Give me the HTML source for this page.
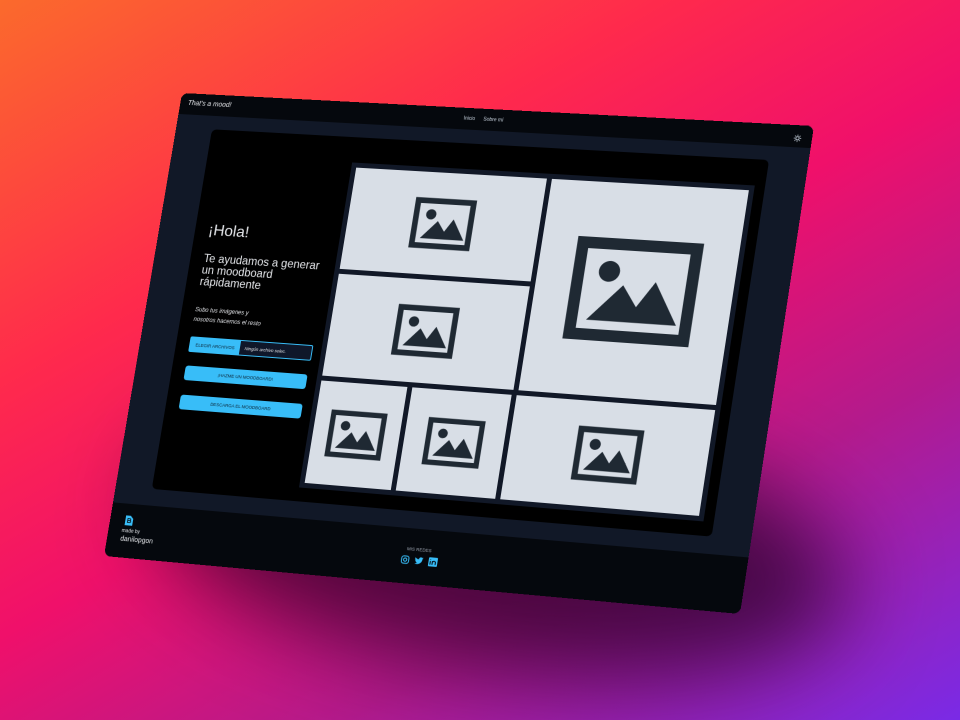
<!DOCTYPE html>
<html><head><meta charset="utf-8"><style>
*{margin:0;padding:0;box-sizing:border-box}
html,body{width:960px;height:720px;overflow:hidden}
body{position:relative;font-family:"Liberation Sans",sans-serif;
background:linear-gradient(150deg,#fb6a2c 0%,#ff2a4c 30%,#f0106a 50%,#b41a8c 72%,#7a2ae6 100%);}
.shadow{position:absolute;left:150px;top:420px;width:700px;height:250px;border-radius:50%;
background:rgba(40,0,40,.75);filter:blur(45px);transform:rotate(8deg)}
.dev{position:absolute;left:0;top:0;width:640px;height:480px;transform-origin:0 0;
transform:matrix3d(0.92417,0.041759,0,-0.0000778,-0.16512,0.95058,0,-0.000025173,0,0,1,0,182,93,0,1);
background:#111827;border-radius:7px;overflow:hidden;color:#e5e7eb}
.hdr{position:absolute;left:0;top:0;width:640px;height:22px;background:#05080d}
.hdr .t{position:absolute;left:8px;top:7px;font-size:7px;font-style:italic;color:#e5e7eb}
.hdr .n{position:absolute;left:295px;top:8px;font-size:5px;color:#cbd5e1}
.sun{position:absolute;left:622px;top:9px;width:8px;height:8px}
.card{position:absolute;left:38px;top:36px;width:564px;height:372px;background:#000;border-radius:5px}
.h1{position:absolute;left:14px;top:96px;font-size:16px;color:#e5e7eb}
.h2{position:absolute;left:14px;top:128px;font-size:11.5px;line-height:12px;color:#e5e7eb;width:130px}
.p{position:absolute;left:14px;top:182px;font-size:6px;line-height:10px;color:#e5e7eb;font-style:italic}
.file{position:absolute;left:14px;top:214px;width:128px;height:16px;border:1px solid #38bdf8;border-radius:2px;background:#0f172a;font-size:4.5px;display:flex}
.file b{background:#38bdf8;color:#0b2030;width:52px;font-weight:normal;display:flex;align-items:center;justify-content:center}
.file span{display:flex;align-items:center;padding-left:5px;font-style:italic}
.btn{position:absolute;left:14px;width:127px;height:15px;background:#38bdf8;border-radius:3px;color:#0b2030;font-size:4.5px;display:flex;align-items:center;justify-content:center}
.grid{position:absolute;left:151px;top:26px;width:403px;height:332px;background:#111827}
.c{position:absolute;background:#d8dee6;display:flex;align-items:center;justify-content:center}
.ftr{position:absolute;left:0;top:425px;width:640px;height:55px;background:#05080d}
.ftr .mb{position:absolute;left:14px;top:25px;font-size:5px}
.ftr .dn{position:absolute;left:14px;top:33px;font-size:7px}
.ftr .mr{position:absolute;left:0;width:640px;text-align:center;top:18px;font-size:4.5px;color:#9ca3af}
.ic{position:absolute;left:303px;top:27px;display:flex;gap:5px}
</style></head><body>
<div class="shadow"></div>
<div class="dev">
 <div class="hdr"><div class="t">That's a mood!</div><div class="n">Inicio &nbsp;&nbsp;&nbsp;&nbsp; Sobre mí</div>
 <svg class="sun" viewBox="0 0 10 10"><circle cx="5" cy="5" r="2" fill="none" stroke="#cbd5e1" stroke-width=".9"/><path d="M5 0.5v1.5M5 8v1.5M0.5 5h1.5M8 5h1.5M1.8 1.8l1 1M7.2 7.2l1 1M1.8 8.2l1-1M7.2 2.8l1-1" stroke="#cbd5e1" stroke-width=".9"/></svg></div>
 <div class="card">
  <div class="h1">¡Hola!</div>
  <div class="h2">Te ayudamos a generar un moodboard rápidamente</div>
  <div class="p">Subo tus imágenes y<br>nosotros hacemos el resto</div>
  <div class="file"><b>ELEGIR ARCHIVOS</b><span>Ningún archivo selec.</span></div>
  <div class="btn" style="top:244px">¡HAZME UN MOODBOARD!</div>
  <div class="btn" style="top:274px">DESCARGA EL MOODBOARD</div>
  <div class="grid">
   <div class="c" style="left:5px;top:5px;width:194px;height:104px"><svg width="64" height="52" viewBox="0 0 24 20"><rect x="1.2" y="1.2" width="21.6" height="17.6" fill="none" stroke="#1f2933" stroke-width="2.2"/><circle cx="7" cy="6.5" r="2" fill="#1f2933"/><path d="M4 16L10 9l3 4 3-5 5 8z" fill="#1f2933"/></svg></div>
   <div class="c" style="left:204px;top:5px;width:194px;height:213px"><svg width="128" height="104" viewBox="0 0 24 20"><rect x="1.2" y="1.2" width="21.6" height="17.6" fill="none" stroke="#1f2933" stroke-width="2.2"/><circle cx="7" cy="6.5" r="2" fill="#1f2933"/><path d="M4 16L10 9l3 4 3-5 5 8z" fill="#1f2933"/></svg></div>
   <div class="c" style="left:5px;top:114px;width:194px;height:104px"><svg width="64" height="52" viewBox="0 0 24 20"><rect x="1.2" y="1.2" width="21.6" height="17.6" fill="none" stroke="#1f2933" stroke-width="2.2"/><circle cx="7" cy="6.5" r="2" fill="#1f2933"/><path d="M4 16L10 9l3 4 3-5 5 8z" fill="#1f2933"/></svg></div>
   <div class="c" style="left:5px;top:223px;width:88px;height:104px"><svg width="60" height="48" viewBox="0 0 24 20"><rect x="1.2" y="1.2" width="21.6" height="17.6" fill="none" stroke="#1f2933" stroke-width="2.2"/><circle cx="7" cy="6.5" r="2" fill="#1f2933"/><path d="M4 16L10 9l3 4 3-5 5 8z" fill="#1f2933"/></svg></div>
   <div class="c" style="left:98px;top:223px;width:100px;height:104px"><svg width="60" height="48" viewBox="0 0 24 20"><rect x="1.2" y="1.2" width="21.6" height="17.6" fill="none" stroke="#1f2933" stroke-width="2.2"/><circle cx="7" cy="6.5" r="2" fill="#1f2933"/><path d="M4 16L10 9l3 4 3-5 5 8z" fill="#1f2933"/></svg></div>
   <div class="c" style="left:203px;top:223px;width:195px;height:104px"><svg width="66" height="54" viewBox="0 0 24 20"><rect x="1.2" y="1.2" width="21.6" height="17.6" fill="none" stroke="#1f2933" stroke-width="2.2"/><circle cx="7" cy="6.5" r="2" fill="#1f2933"/><path d="M4 16L10 9l3 4 3-5 5 8z" fill="#1f2933"/></svg></div>
  </div>
 </div>
 <div class="ftr">
  <svg style="position:absolute;left:16px;top:12px" width="8" height="10" viewBox="0 0 8 10"><path d="M0 0h5l3 3v7H0z" fill="#38bdf8"/><path d="M2.5 3h2a1 1 0 010 2h-2zM2.5 5h2.3a1 1 0 010 2H2.5z" fill="none" stroke="#05080d" stroke-width=".8"/></svg>
  <div class="mb">made by</div><div class="dn">danilopgon</div>
  <div class="mr">MIS REDES</div>
  <div class="ic">
   <svg width="9" height="9" viewBox="0 0 10 10"><rect x="1" y="1" width="8" height="8" rx="2.4" fill="none" stroke="#38bdf8" stroke-width="1.1"/><circle cx="5" cy="5" r="1.8" fill="none" stroke="#38bdf8" stroke-width="1.1"/></svg>
   <svg width="9" height="9" viewBox="0 0 24 24"><path d="M23 4.6a9.4 9.4 0 01-2.7.7 4.7 4.7 0 002-2.6 9.4 9.4 0 01-3 1.1 4.7 4.7 0 00-8 4.3A13.3 13.3 0 011.7 3.2a4.7 4.7 0 001.4 6.3 4.6 4.6 0 01-2.1-.6 4.7 4.7 0 003.8 4.6 4.7 4.7 0 01-2.1.1 4.7 4.7 0 004.4 3.3A9.4 9.4 0 010 18.8 13.3 13.3 0 007.2 21c8.6 0 13.4-7.2 13.4-13.4v-.6A9.5 9.5 0 0023 4.6z" fill="#38bdf8"/></svg>
   <svg width="9" height="9" viewBox="0 0 10 10"><rect width="10" height="10" rx="1" fill="#38bdf8"/><path d="M2 4v4M2 2.2v.6M4.3 8V4M4.3 5.5c0-1.5 3.5-2 3.5 0V8" stroke="#05080d" stroke-width="1.1" fill="none"/></svg>
  </div>
 </div>
</div>
</body></html>
